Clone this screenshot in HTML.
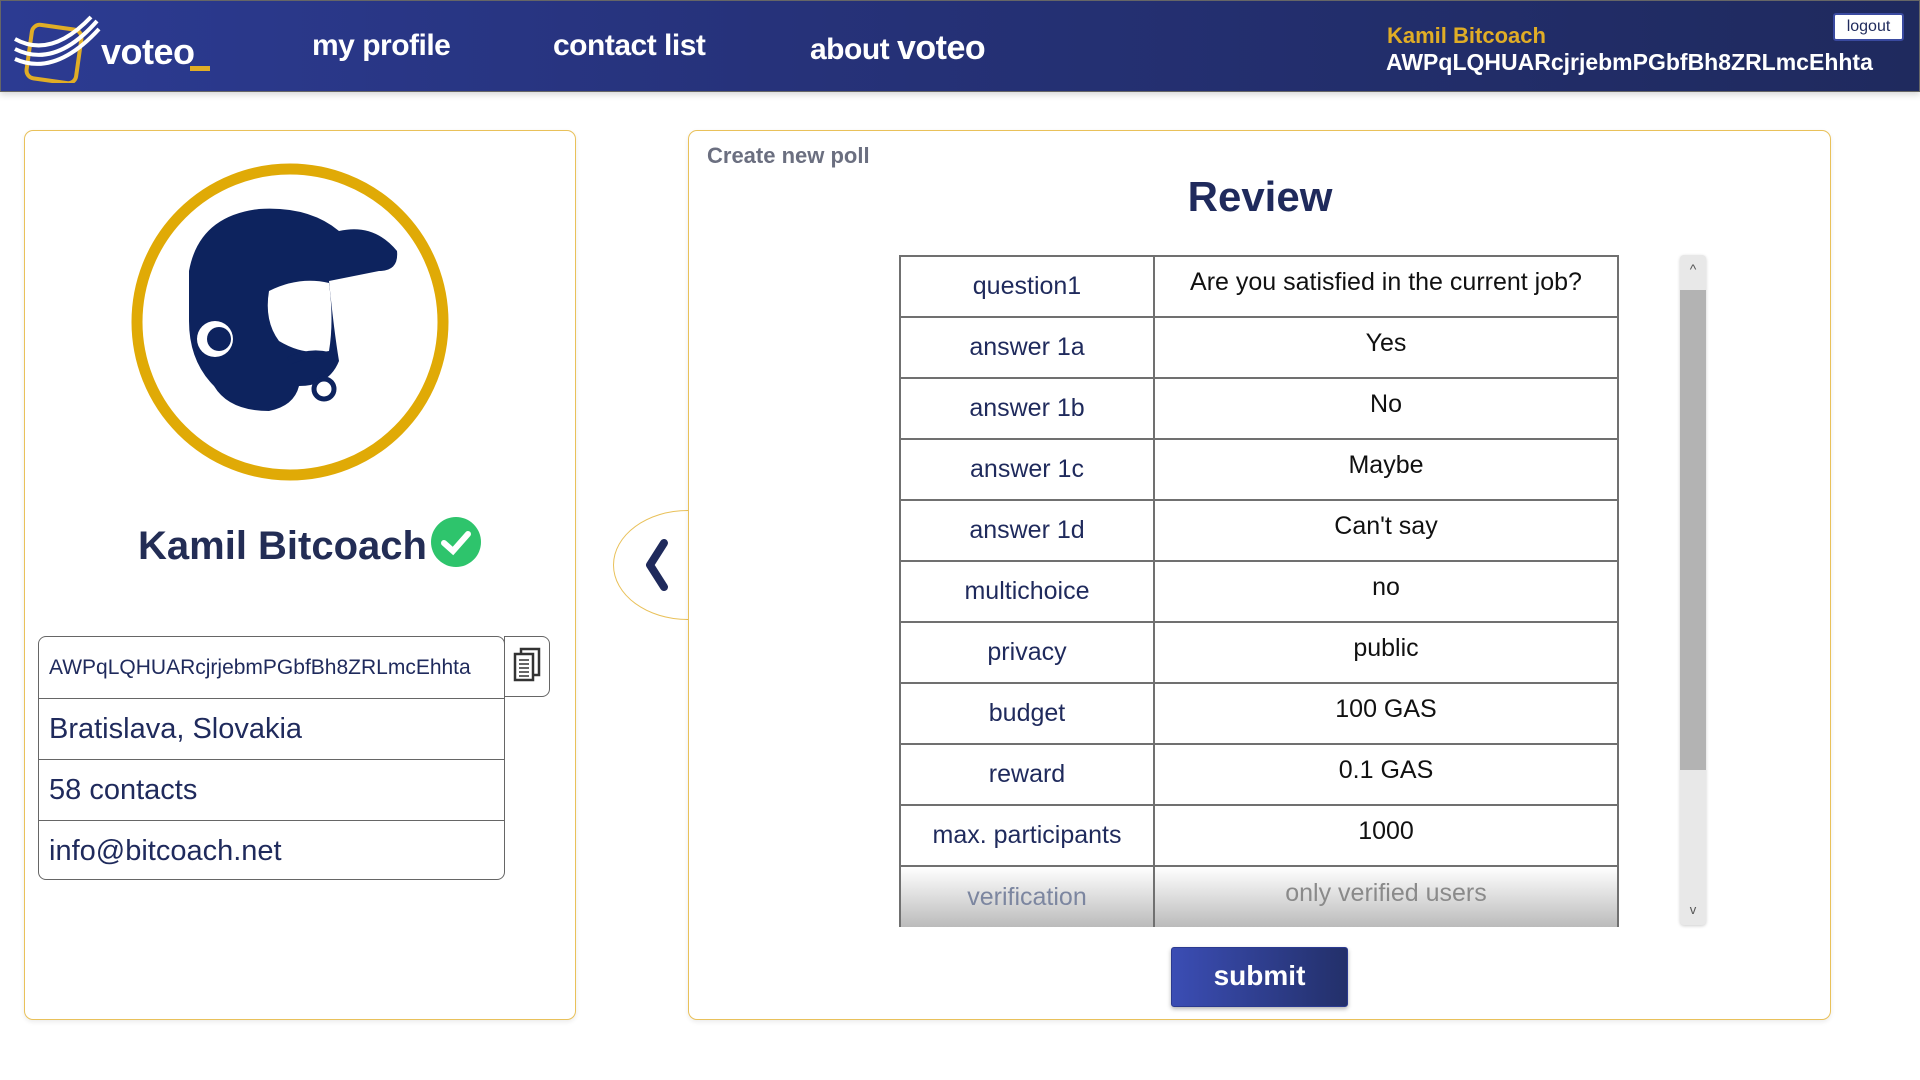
<!DOCTYPE html>
<html><head><meta charset="utf-8"><style>
*{box-sizing:border-box;margin:0;padding:0}
body{width:1920px;height:1080px;background:#fff;font-family:"Liberation Sans",sans-serif;position:relative;overflow:hidden;color:#1f2a5c}
.hdr{position:absolute;left:0;top:0;width:1920px;height:92px;background:linear-gradient(90deg,#2c3b92 0%,#26327a 40%,#1f2a5e 100%);border:1px solid #666;box-shadow:0 3px 6px rgba(0,0,0,.15)}
.nav{position:absolute;top:28px;color:#fff;font-size:30px;font-weight:bold;letter-spacing:-0.5px}
.card{position:absolute;border:1.5px solid #e9c15a;border-radius:9px;background:#fff;box-shadow:0 2px 5px rgba(0,0,0,.08)}
.info{position:absolute;left:38px;width:467px;border:1px solid #666;border-radius:8px;overflow:hidden}
.info div{height:61px;border-top:1.5px solid #666;font-size:29px;padding-left:10px;line-height:61px;color:#1f2a5c}
.info div:first-child{border-top:none}
table{position:absolute;left:899px;top:255px;width:720px;border-collapse:collapse}
td{border:2px solid #707070;height:61px;text-align:center;font-size:25px}
td.k{width:254px;color:#1f2a5c}
td.v{color:#111;padding-bottom:8px}
tr.last td{background:linear-gradient(#fff,#bbb);color:#8a8a8a;border-bottom:none}
tr.last td.k{color:#7c86a0}
</style></head><body>
<div class="hdr">
<svg style="position:absolute;left:10px;top:10px" width="90" height="72" viewBox="0 0 90 72">
<rect x="18" y="16" width="50" height="54" rx="8" transform="rotate(8 43 43)" fill="none" stroke="#e0ad26" stroke-width="4"/>
<path d="M4 28 Q40 48 80 6" fill="none" stroke="#fff" stroke-width="4"/>
<path d="M4 38 Q44 58 86 10" fill="none" stroke="#fff" stroke-width="4"/>
<path d="M4 48 Q44 66 88 18" fill="none" stroke="#fff" stroke-width="4"/>
</svg>
<div class="nav" style="left:100px;top:30px;font-size:36px">voteo</div>
<div style="position:absolute;left:189px;top:65px;width:20px;height:5px;background:#e0ad26"></div>
<div class="nav" style="left:311px">my profile</div>
<div class="nav" style="left:552px">contact list</div>
<div class="nav" style="left:809px">about <span style="font-size:34px">voteo</span></div>
<div style="position:absolute;left:1386px;top:22px;color:#e0ad26;font-size:22px;font-weight:bold">Kamil Bitcoach</div>
<div style="position:absolute;left:1385px;top:48px;color:#fff;font-size:23px;font-weight:bold">AWPqLQHUARcjrjebmPGbfBh8ZRLmcEhhta</div>
<div style="position:absolute;left:1832px;top:12px;width:71px;height:28px;background:#fff;border:2px solid #3a4aa0;border-radius:3px;font-size:16px;text-align:center;line-height:24px;color:#1f2a5c">logout</div>
</div>

<div class="card" style="left:24px;top:130px;width:552px;height:890px">
<svg style="position:absolute;left:104px;top:30px" width="322" height="322" viewBox="0 0 322 322">
<circle cx="161" cy="161" r="153" fill="#fff" stroke="#e0aa06" stroke-width="11"/>
<path d="M60 110 Q70 55 130 48 Q180 45 210 70 Q245 62 268 90 Q270 110 250 110 L200 120 Q205 170 210 200 Q200 225 170 225 Q165 245 140 250 Q100 250 85 225 Q60 200 60 160 Z" fill="#0d235e"/>
<circle cx="86" cy="178" r="18" fill="#fff"/><circle cx="90" cy="178" r="12" fill="#0d235e"/>
<path d="M140 130 Q170 115 200 122 Q205 160 200 190 Q175 195 150 180 Q135 160 140 130Z" fill="#fff"/>
<path d="M160 200 Q180 190 200 195" stroke="#0d235e" stroke-width="8" fill="none"/>
<circle cx="195" cy="228" r="10" fill="none" stroke="#0d235e" stroke-width="5"/>
</svg>
<div style="position:absolute;left:113px;top:393px;font-size:40px;font-weight:bold;color:#232d55">Kamil Bitcoach</div>
<svg style="position:absolute;left:405px;top:385px" width="52" height="52"><circle cx="26" cy="26" r="25" fill="#2ec46c"/><path d="M14 27 L23 35 L38 18" fill="none" stroke="#fff" stroke-width="6" stroke-linecap="round"/></svg>
</div>
<div class="info" style="left:38px;top:636px;height:244px">
<div style="font-size:21px">AWPqLQHUARcjrjebmPGbfBh8ZRLmcEhhta</div>
<div>Bratislava, Slovakia</div>
<div>58 contacts</div>
<div>info@bitcoach.net</div>
</div>
<div style="position:absolute;left:504px;top:636px;width:46px;height:61px;border:1px solid #666;border-radius:0 8px 8px 0;background:#fff">
<svg width="44" height="59" viewBox="0 0 44 59"><rect x="16" y="12" width="18" height="26" fill="#fff" stroke="#333" stroke-width="2.5"/><rect x="10" y="17" width="18" height="26" fill="#fff" stroke="#333" stroke-width="2.5"/><path d="M14 23h10M14 27h10M14 31h10M14 35h10M14 39h10" stroke="#333" stroke-width="1.5"/></svg>
</div>

<div style="position:absolute;left:613px;top:510px;width:150px;height:110px;border:1.5px solid #e9c15a;border-radius:50%;background:#fff"></div>
<div class="card" style="left:688px;top:130px;width:1143px;height:890px"></div>
<svg style="position:absolute;left:640px;top:537px" width="34" height="56"><path d="M24 6 L10 28 L24 50" fill="none" stroke="#1f2a5c" stroke-width="8" stroke-linecap="round" stroke-linejoin="round"/></svg>
<div style="position:absolute;left:707px;top:143px;font-size:22px;font-weight:bold;color:#6b6f80">Create new poll</div>
<div style="position:absolute;left:1060px;width:400px;text-align:center;top:173px;font-size:42px;font-weight:bold;color:#1f2a5c">Review</div>
<table>
<tr><td class="k">question1</td><td class="v">Are you satisfied in the current job?</td></tr>
<tr><td class="k">answer 1a</td><td class="v">Yes</td></tr>
<tr><td class="k">answer 1b</td><td class="v">No</td></tr>
<tr><td class="k">answer 1c</td><td class="v">Maybe</td></tr>
<tr><td class="k">answer 1d</td><td class="v">Can't say</td></tr>
<tr><td class="k">multichoice</td><td class="v">no</td></tr>
<tr><td class="k">privacy</td><td class="v">public</td></tr>
<tr><td class="k">budget</td><td class="v">100 GAS</td></tr>
<tr><td class="k">reward</td><td class="v">0.1 GAS</td></tr>
<tr><td class="k">max. participants</td><td class="v">1000</td></tr>
<tr class="last"><td class="k">verification</td><td class="v">only verified users</td></tr>
</table>
<div style="position:absolute;left:1680px;top:255px;width:26px;height:670px;background:#e8e8e8;border-radius:4px;box-shadow:0 1px 3px rgba(0,0,0,.2)">
<div style="position:absolute;top:35px;left:0;width:26px;height:480px;background:#b3b3b3"></div>
<div style="position:absolute;top:6px;width:26px;text-align:center;font-size:14px;color:#555">^</div>
<div style="position:absolute;bottom:8px;width:26px;text-align:center;font-size:13px;color:#555">v</div>
</div>
<div style="position:absolute;left:1171px;top:947px;width:177px;height:60px;background:linear-gradient(90deg,#3b4db4,#23306a);border:1.5px solid #2b3a90;border-radius:3px;color:#fff;font-size:28px;font-weight:bold;text-align:center;line-height:56px;box-shadow:0 2px 4px rgba(0,0,0,.3)">submit</div>
</body></html>
